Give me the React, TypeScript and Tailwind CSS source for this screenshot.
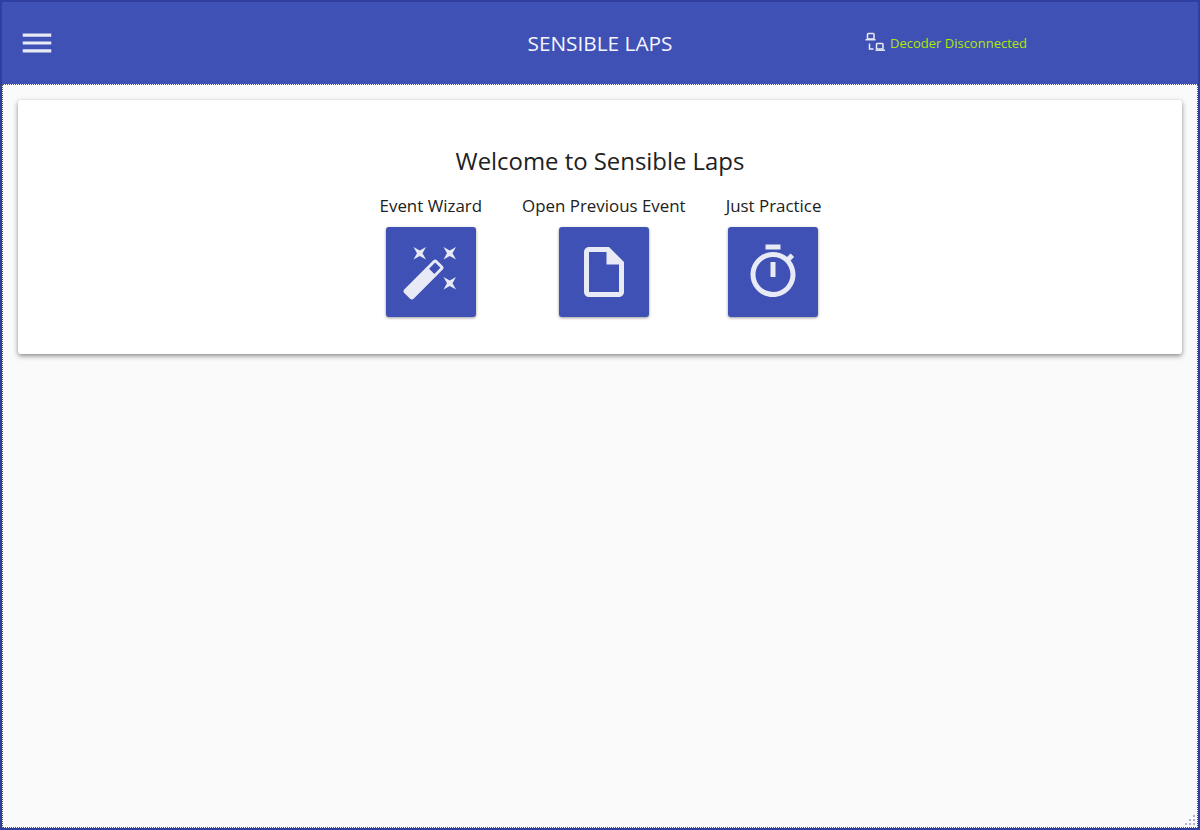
import React from 'react';

const fontStack = "font-['Open_Sans','Noto_Sans',sans-serif]";

const ActionButton: React.FC<{ label: string; buttonClass?: string; children: React.ReactNode }> = ({
  label,
  buttonClass = '',
  children,
}) => (
  <div className="flex flex-col items-center">
    <span className="text-[16.9px] leading-[24px] text-[#212121] whitespace-nowrap">{label}</span>
    <button className={`mt-[9px] w-[90px] h-[90px] rounded-[3px] bg-[#3f51b5] flex items-center justify-center shadow-[0_1px_3px_rgba(0,0,0,0.4)] ${buttonClass}`}>
      <svg width="60" height="60" viewBox="0 0 24 24" fill="#e8eaf6">
        {children}
      </svg>
    </button>
  </div>
);

const App: React.FC = () => {
  return (
    <div className={`w-[1200px] h-[830px] flex flex-col border-2 border-[#303f9f] bg-[#fafafa] overflow-hidden ${fontStack}`}>
      <header className="h-[82px] shrink-0 bg-[#3f51b5] flex items-center relative">
        <svg className="ml-[16px] mt-[-1px]" width="38" height="38" viewBox="0 0 24 24" fill="#e8eaf6">
          <path d="M3 18h18v-2H3v2zm0-5h18v-2H3v2zm0-5h18V6H3v2z" />
        </svg>
        <h1 className="absolute left-0 right-0 text-center text-[20.8px] text-[#f5f5ff] leading-none">SENSIBLE LAPS</h1>
        <div className="absolute left-[863px] top-[30px] flex items-center gap-[5px]">
          <svg width="20" height="20" viewBox="0 0 20 20" fill="none" stroke="#e8eaf6" strokeWidth="1.5">
            <rect x="2.5" y="1.5" width="6.5" height="5.5" rx="0.8" />
            <path d="M0.5 7.7h10" />
            <rect x="11.5" y="11.5" width="6.5" height="5.5" rx="0.8" />
            <path d="M10.5 18.2h9.5" />
            <path d="M4.5 11.5v5.5h4" />
          </svg>
          <span className="mt-[2px] text-[13px] leading-[18px] text-[#aeea00] whitespace-nowrap">Decoder Disconnected</span>
        </div>
      </header>
      <main className="flex-1 border border-dotted border-[#555] px-[15px] pt-[15px] relative">
        <section className="h-[254px] bg-white rounded-[3px] shadow-[0_2px_5px_rgba(0,0,0,0.45)] flex flex-col items-center pt-[45px]">
          <h2 className="text-[23.9px] leading-[32px] text-[#212121]">Welcome to Sensible Laps</h2>
          <div className="flex mt-[17px] gap-[40px] ml-[1px]">
            <ActionButton label="Event Wizard">
              <path d="M7.5,5.6L5,7L6.4,4.5L5,2L7.5,3.4L10,2L8.6,4.5L10,7L7.5,5.6M19.5,15.4L22,14L20.6,16.5L22,19L19.5,17.6L17,19L18.4,16.5L17,14L19.5,15.4M22,2L20.6,4.5L22,7L19.5,5.6L17,7L18.4,4.5L17,2L19.5,3.4L22,2M13.34,12.78L15.78,10.34L13.66,8.22L11.22,10.66L13.34,12.78M14.37,7.29L16.71,9.63C17.1,10 17.1,10.65 16.71,11.04L5.04,22.71C4.65,23.1 4,23.1 3.63,22.71L1.29,20.37C0.9,20 0.9,19.35 1.29,18.96L12.96,7.29C13.35,6.9 14,6.9 14.37,7.29Z" />
            </ActionButton>
            <ActionButton label="Open Previous Event">
              <path d="M14 2H6c-1.1 0-1.99.9-1.99 2L4 20c0 1.1.89 2 1.99 2H18c1.1 0 2-.9 2-2V8l-6-6zm4 18H6V4h7v5h5v11z" />
            </ActionButton>
            <ActionButton label="Just Practice" buttonClass="mr-[2px]">
              <path d="M15 1H9v2h6V1zm-4 13h2V8h-2v6zm8.03-6.61l1.42-1.42c-.43-.51-.9-.99-1.41-1.41l-1.42 1.42C16.07 4.74 14.12 4 12 4c-4.97 0-9 4.03-9 9s4.02 9 9 9 9-4.03 9-9c0-2.12-.74-4.07-1.97-5.61zM12 20c-3.87 0-7-3.13-7-7s3.13-7 7-7 7 3.13 7 7-3.13 7-7 7z" />
            </ActionButton>
          </div>
        </section>
        {/* resize grip */}
        <svg className="absolute right-[1px] bottom-[1px]" width="12" height="12" viewBox="0 0 12 12" fill="#aab2d8">
          <rect x="9" y="1" width="2" height="2" />
          <rect x="5" y="5" width="2" height="2" />
          <rect x="9" y="5" width="2" height="2" />
          <rect x="1" y="9" width="2" height="2" />
          <rect x="5" y="9" width="2" height="2" />
          <rect x="9" y="9" width="2" height="2" />
        </svg>
      </main>
    </div>
  );
};

export default App;
